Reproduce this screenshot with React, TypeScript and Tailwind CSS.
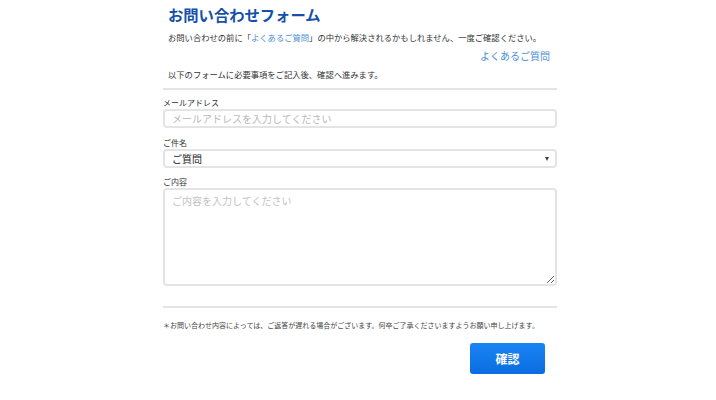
import { useState } from "react";

const App = () => {
    const [subject, setSubject] = useState("ご質問");

    return (
        <div
            className="w-full min-h-[400px] bg-white text-[#333]"
            style={{ fontFamily: '"Noto Sans CJK JP", "Noto Sans", sans-serif' }}
        >
            <div className="ml-[163px] w-[394px] pt-[4px]">
                {/* ヘッダー */}
                <div className="pl-[5px] pr-[7px]">
                    <h1 className="text-[15.3px] font-bold leading-[20px] text-[#1450a8]">
                        お問い合わせフォーム
                    </h1>
                    <p className="mt-[7px] text-[8.3px] leading-[12px] whitespace-nowrap">
                        お問い合わせの前に「<a href="#" className="text-[#4a8fd8]">よくあるご質問</a>」の中から解決されるかもしれません、一度ご確認ください。
                    </p>
                    <div className="mt-[6px] flex justify-end">
                        <a href="#" className="text-[10px] leading-[14px] text-[#4a8fd8]">
                            よくあるご質問
                        </a>
                    </div>
                    <p className="mt-[5px] text-[8.3px] leading-[12px]">
                        以下のフォームに必要事項をご記入後、確認へ進みます。
                    </p>
                </div>

                <div className="mt-[8px] h-[2px] bg-[#e4e4e4]" />

                {/* フォーム */}
                <div className="mt-[7px] flex flex-col">
                    <label className="text-[8px] leading-[12px]">メールアドレス</label>
                    <input
                        className="block h-[19px] w-full rounded-[4px] border-2 border-[#e4e4e4] px-[7px] text-[10px] leading-[14px] text-[#333] outline-none placeholder:text-[#b9b9b9]"
                        placeholder="メールアドレスを入力してください"
                    />

                    <label className="mt-[9px] text-[8px] leading-[12px]">ご件名</label>
                    <div className="relative">
                        <select
                            value={subject}
                            onChange={(e) => setSubject(e.target.value)}
                            className="block h-[19px] w-full appearance-none rounded-[4px] border-2 border-[#e4e4e4] bg-white px-[7px] text-[10px] leading-[14px] text-[#222] outline-none"
                        >
                            <option>ご質問</option>
                            <option>ご意見</option>
                            <option>その他</option>
                        </select>
                        <span className="pointer-events-none absolute right-[8px] top-[8px] h-0 w-0 border-x-[2.5px] border-t-[4px] border-x-transparent border-t-[#444]" />
                    </div>

                    <label className="mt-[8px] text-[8px] leading-[12px]">ご内容</label>
                    <textarea
                        className="block h-[98px] w-full resize-y rounded-[4px] border-2 border-[#e4e4e4] px-[7px] py-[3px] text-[10px] leading-[16px] text-[#333] outline-none placeholder:text-[#c2c2c2]"
                        placeholder="ご内容を入力してください"
                    />
                </div>

                <div className="mt-[20px] h-[2px] bg-[#e4e4e4]" />

                <p className="mt-[12px] whitespace-nowrap text-[7px] leading-[10px] text-[#444]">
                    ＊お問い合わせ内容によっては、ご返答が遅れる場合がございます。何卒ご了承くださいますようお願い申し上げます。
                </p>

                <div className="mt-[13px] flex justify-end pr-[12px]">
                    <button className="h-[31px] w-[75px] rounded-[3px] bg-gradient-to-b from-[#1a84f5] to-[#0a6de0] text-[12px] font-bold text-white">
                        確認
                    </button>
                </div>
            </div>
        </div>
    );
};

export default App;
